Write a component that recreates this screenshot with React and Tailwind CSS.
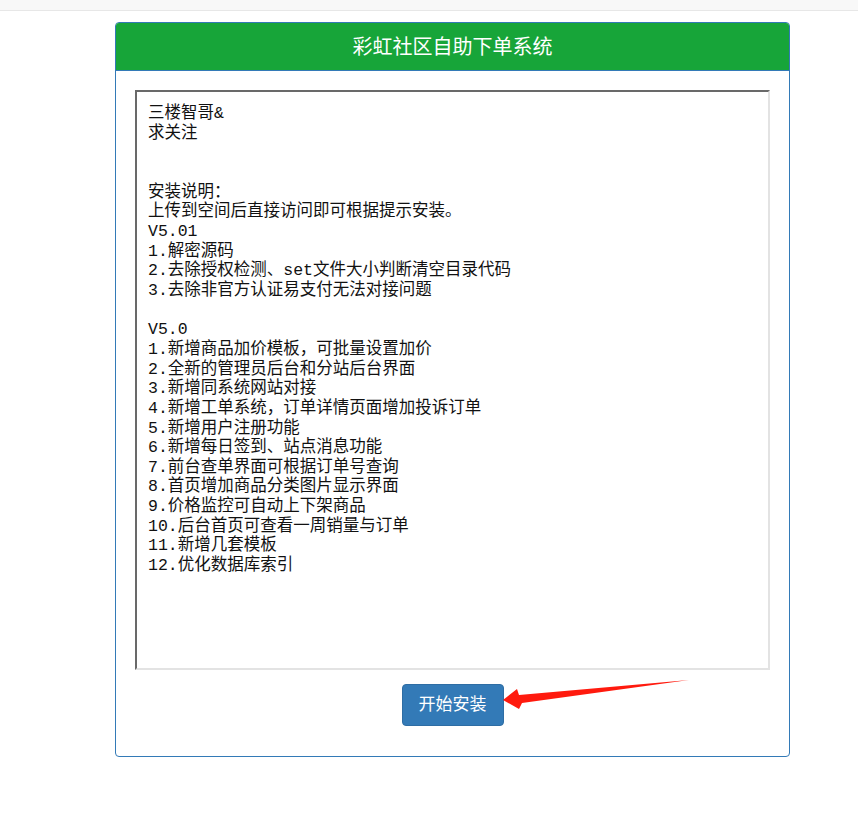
import { useState } from 'react'

const NOTES = `三楼智哥&
求关注


安装说明：
上传到空间后直接访问即可根据提示安装。
V5.01
1.解密源码
2.去除授权检测、set文件大小判断清空目录代码
3.去除非官方认证易支付无法对接问题

V5.0
1.新增商品加价模板，可批量设置加价
2.全新的管理员后台和分站后台界面
3.新增同系统网站对接
4.新增工单系统，订单详情页面增加投诉订单
5.新增用户注册功能
6.新增每日签到、站点消息功能
7.前台查单界面可根据订单号查询
8.首页增加商品分类图片显示界面
9.价格监控可自动上下架商品
10.后台首页可查看一周销量与订单
11.新增几套模板
12.优化数据库索引`

export default function App() {
  const [notes] = useState(NOTES)

  return (
    <div className="min-h-[813px] bg-white font-['Liberation_Sans','Noto_Sans_CJK_SC',sans-serif]">
      {/* top strip */}
      <div className="h-[11px] bg-[#f8f8f8] border-b border-[#e7e7e7]" />

      {/* panel */}
      <div className="relative ml-[115px] mt-[11px] w-[675px] border border-[#337ab7] rounded-[4px] bg-white">
        <div className="h-[48px] bg-[#17a539] border-b border-[#337ab7] rounded-t-[3px] flex items-center justify-center">
          <h3 className="text-white text-[20px] leading-none">彩虹社区自助下单系统</h3>
        </div>

        <div className="px-[19px] pt-[19px] pb-[30px] flex flex-col items-center">
          <textarea
            readOnly
            value={notes}
            className="w-full h-[580px] resize-none border-2 border-t-[#696969] border-l-[#696969] border-r-[#e3e3e3] border-b-[#e3e3e3] pt-[12px] px-[11px] text-[16.5px] leading-[19.65px] text-[#111] outline-none overflow-hidden font-['Liberation_Mono','Noto_Sans_CJK_SC',monospace]"
          />
          <button className="mt-[14px] h-[42px] w-[102px] rounded-[4px] bg-[#337ab7] border border-[#2e6da4] text-white text-[17px]">
            开始安装
          </button>
        </div>

        {/* red annotation arrow */}
        <svg className="absolute left-[386px] top-[656px] pointer-events-none" width="190" height="32" viewBox="0 0 190 32">
          <polygon points="1,21 15,10 17,16 187,1 20,24 17,30" fill="#ff1a0e" />
        </svg>
      </div>
    </div>
  )
}
